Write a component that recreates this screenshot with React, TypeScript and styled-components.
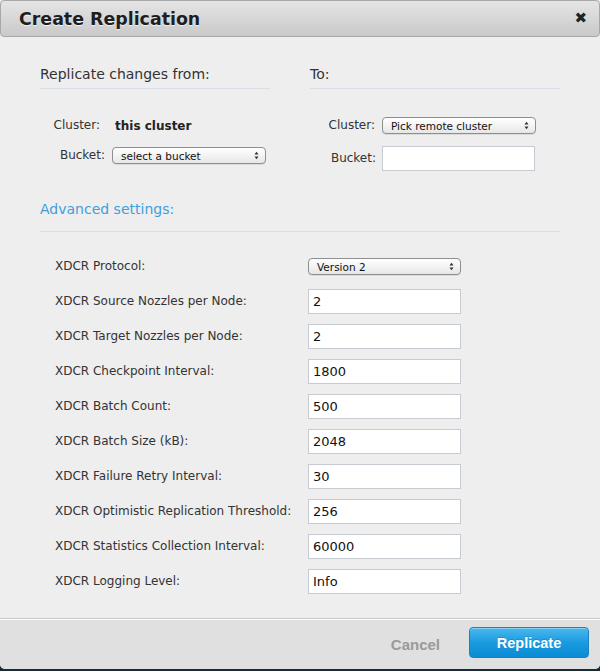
import React from "react";
import styled, { createGlobalStyle } from "styled-components";

const GlobalStyle = createGlobalStyle`
  html, body {
    margin: 0;
    padding: 0;
    background: #1b2a33;
  }
  body {
    font-family: "DejaVu Sans", Verdana, sans-serif;
    color: #333;
  }
  * { box-sizing: border-box; }
`;

const Dialog = styled.div`
  width: 600px;
  height: 669px;
  display: flex;
  flex-direction: column;
  background: #eeeeee;
  border-radius: 0 0 5px 5px;
  overflow: hidden;
`;

const Header = styled.div`
  height: 37px;
  flex: none;
  display: flex;
  align-items: center;
  justify-content: space-between;
  padding: 0 12px 0 18px;
  background: linear-gradient(#e5e5e5, #c9c9c9);
  border: 1px solid #a8a8a8;
  border-radius: 4px;
`;

const Title = styled.h1`
  margin: 0;
  font-family: "DejaVu Sans", Verdana, sans-serif;
  font-weight: bold;
  font-size: 17.4px;
  color: #1e1e1e;
  text-shadow: 0 1px 0 rgba(255, 255, 255, 0.7);
  line-height: 20px;
`;

const Close = styled.span`
  font-family: "DejaVu Sans", sans-serif;
  font-weight: bold;
  font-size: 15px;
  color: #222;
  line-height: 1;
`;

const Body = styled.div`
  flex: 1;
  padding: 27px 40px 0 40px;
`;

const Columns = styled.div`
  display: grid;
  grid-template-columns: 230px 250px;
  column-gap: 40px;
  align-items: start;
`;

const Column = styled.div`
  display: flex;
  flex-direction: column;
`;

const SectionTitle = styled.div`
  font-size: 14px;
  line-height: 20px;
  color: #333;
  padding-bottom: 4px;
  border-bottom: 1px solid #d8dee5;
`;

const FieldGrid = styled.div<{ $labelWidth: number; $gap: number }>`
  display: grid;
  grid-template-columns: ${(p) => p.$labelWidth}px 1fr;
  row-gap: ${(p) => p.$gap}px;
  margin-top: 24px;
  align-items: center;
`;

const FieldLabel = styled.div<{ $pad?: number }>`
  font-size: 12px;
  color: #333;
  height: 25px;
  line-height: 25px;
  text-align: right;
  padding-right: ${(p) => p.$pad ?? 7}px;
`;

const FieldValue = styled.div<{ $offset?: number }>`
  display: flex;
  align-items: center;
  height: 25px;
  padding-left: ${(p) => p.$offset ?? 0}px;
`;

const StrongValue = styled.span`
  font-size: 12px;
  font-weight: bold;
  color: #222;
`;

const SelectBox = styled.div<{ $width: number }>`
  width: ${(p) => p.$width}px;
  height: 17px;
  display: flex;
  align-items: center;
  justify-content: space-between;
  padding: 0 6px 0 8px;
  border: 1px solid #8e8e8e;
  border-radius: 4px;
  background: linear-gradient(#ffffff, #f1f1f1 60%, #e6e6e6);
  box-shadow: 0 1px 0 rgba(0, 0, 0, 0.08);
  font-size: 10.5px;
  color: #111;
  white-space: nowrap;
`;

const TextInput = styled.div<{ $width: number }>`
  width: ${(p) => p.$width}px;
  height: 25px;
  display: flex;
  align-items: center;
  padding: 0 4px;
  background: #fff;
  border: 1px solid #c6cbd1;
  font-size: 13px;
  color: #111;
`;

const Arrows = () => (
  <svg width="5" height="9" viewBox="0 0 5 9">
    <path d="M0.5 3.5 L2.5 0.8 L4.5 3.5 Z" fill="#333" />
    <path d="M0.5 5.5 L2.5 8.2 L4.5 5.5 Z" fill="#333" />
  </svg>
);

const Select = ({ width, children }: { width: number; children: React.ReactNode }) => (
  <SelectBox $width={width}>
    <span>{children}</span>
    <Arrows />
  </SelectBox>
);

const AdvancedTitle = styled.div`
  margin-top: 28px;
  font-size: 14px;
  line-height: 20px;
  color: #3f9fdc;
  padding-bottom: 12px;
  border-bottom: 1px solid #d8dee5;
`;

const SettingsGrid = styled.div`
  display: grid;
  grid-template-columns: 253px 153px;
  row-gap: 10px;
  padding: 22px 0 0 15px;
  align-items: center;
`;

const SettingLabel = styled.div`
  font-size: 12px;
  color: #333;
  height: 25px;
  line-height: 25px;
  white-space: nowrap;
`;

const SettingValue = styled.div`
  display: flex;
  align-items: center;
  height: 25px;
`;

const Footer = styled.div`
  height: 51px;
  flex: none;
  display: flex;
  justify-content: flex-end;
  align-items: flex-start;
  padding: 8px 11px 0 0;
  background: #dfe0df;
  border-top: 1px solid #c8c8c8;
  box-shadow: inset 0 1px 0 #ffffff;
`;

const CancelButton = styled.button`
  background: none;
  border: none;
  padding: 0;
  margin-right: 29px;
  height: 31px;
  font-family: "Liberation Sans", Arial, sans-serif;
  font-weight: bold;
  font-size: 15px;
  color: #9a9a9a;
  cursor: pointer;
  transform: translateY(2px);
`;

const PrimaryButton = styled.button`
  width: 120px;
  height: 31px;
  padding: 0;
  border: 1px solid #1b80c2;
  border-radius: 4px;
  background: linear-gradient(#4ab8ee, #1a9be0 50%, #0a8bd3);
  box-shadow: inset 0 1px 0 rgba(255, 255, 255, 0.35);
  font-family: "Liberation Sans", Arial, sans-serif;
  font-weight: bold;
  font-size: 14.5px;
  color: #fff;
  text-shadow: 0 -1px 0 rgba(0, 0, 0, 0.15);
  cursor: pointer;
`;

const settings: { label: string; value: string; select?: boolean }[] = [
  { label: "XDCR Protocol:", value: "Version 2", select: true },
  { label: "XDCR Source Nozzles per Node:", value: "2" },
  { label: "XDCR Target Nozzles per Node:", value: "2" },
  { label: "XDCR Checkpoint Interval:", value: "1800" },
  { label: "XDCR Batch Count:", value: "500" },
  { label: "XDCR Batch Size (kB):", value: "2048" },
  { label: "XDCR Failure Retry Interval:", value: "30" },
  { label: "XDCR Optimistic Replication Threshold:", value: "256" },
  { label: "XDCR Statistics Collection Interval:", value: "60000" },
  { label: "XDCR Logging Level:", value: "Info" },
];

export default function App() {
  return (
    <>
      <GlobalStyle />
      <Dialog>
        <Header>
          <Title>Create Replication</Title>
          <Close>✖</Close>
        </Header>
        <Body>
          <Columns>
            <Column>
              <SectionTitle>Replicate changes from:</SectionTitle>
              <FieldGrid $labelWidth={72} $gap={5}>
                <FieldLabel $pad={12}>Cluster:</FieldLabel>
                <FieldValue $offset={3}>
                  <StrongValue>this cluster</StrongValue>
                </FieldValue>
                <FieldLabel $pad={7}>Bucket:</FieldLabel>
                <FieldValue>
                  <Select width={154}>select a bucket</Select>
                </FieldValue>
              </FieldGrid>
            </Column>
            <Column>
              <SectionTitle>To:</SectionTitle>
              <FieldGrid $labelWidth={72} $gap={8}>
                <FieldLabel $pad={7}>Cluster:</FieldLabel>
                <FieldValue>
                  <Select width={154}>Pick remote cluster</Select>
                </FieldValue>
                <FieldLabel $pad={6}>Bucket:</FieldLabel>
                <FieldValue>
                  <TextInput $width={153} />
                </FieldValue>
              </FieldGrid>
            </Column>
          </Columns>
          <AdvancedTitle>Advanced settings:</AdvancedTitle>
          <SettingsGrid>
            {settings.map((s) => (
              <React.Fragment key={s.label}>
                <SettingLabel>{s.label}</SettingLabel>
                <SettingValue>
                  {s.select ? (
                    <Select width={153}>{s.value}</Select>
                  ) : (
                    <TextInput $width={153}>{s.value}</TextInput>
                  )}
                </SettingValue>
              </React.Fragment>
            ))}
          </SettingsGrid>
        </Body>
        <Footer>
          <CancelButton>Cancel</CancelButton>
          <PrimaryButton>Replicate</PrimaryButton>
        </Footer>
      </Dialog>
    </>
  );
}
